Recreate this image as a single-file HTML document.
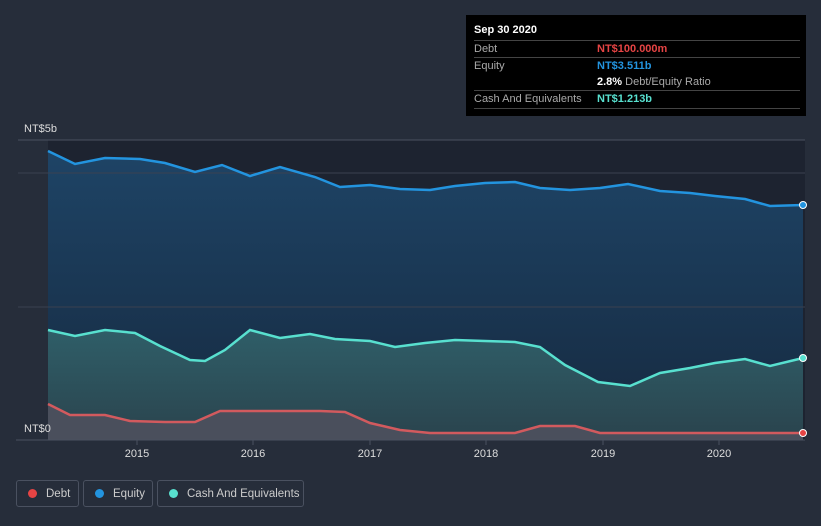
<!DOCTYPE html><html><head><style>
body{margin:0;width:821px;height:526px;background:#262d3a;font-family:"Liberation Sans",sans-serif;overflow:hidden;position:relative}
.tip{position:absolute;left:466px;top:15px;width:340px;height:101px;background:#000;color:#fff;font-size:11px}
.row{position:absolute;left:8px;width:326px;border-top:1px solid #444;height:17px;line-height:17px}
.lab{color:#aaa}
.v{position:absolute;left:123px;top:0;font-weight:bold}
.leg{position:absolute;top:480px;height:27px;border:1px solid #4a5160;border-radius:3px;color:#ccc;font-size:11.5px;line-height:26px;box-sizing:border-box;white-space:nowrap}
.dot{display:inline-block;width:9px;height:9px;border-radius:50%;margin:0 9px 0 11px;vertical-align:-1px}
</style></head><body>
<svg width="821" height="526" style="position:absolute;left:0;top:0">
<defs>
<linearGradient id="eq" x1="0" y1="0" x2="0" y2="1"><stop offset="0" stop-color="#1e4466"/><stop offset="1" stop-color="#16293f"/></linearGradient>
<linearGradient id="ca" x1="0" y1="0" x2="0" y2="1"><stop offset="0" stop-color="#2f5e68"/><stop offset="1" stop-color="#2a434d"/></linearGradient>
</defs>
<rect x="48" y="140" width="757" height="300" fill="#1d2330"/>
<path d="M48,151 L75,164 L105,158 L140,159 L165,163 L195,172 L222,165 L250,176 L280,167 L315,177 L340,187 L370,185 L400,189 L430,190 L455,186 L485,183 L515,182 L540,188 L570,190 L600,188 L628,184 L660,191 L690,193 L715,196 L745,199 L770,206 L803,205 L803,440 L48,440Z" fill="url(#eq)"/>
<path d="M48,330 L75,336 L105,330 L135,333 L160,346 L190,360 L205,361 L225,350 L250,330 L280,338 L310,334 L335,339 L370,341 L395,347 L425,343 L455,340 L485,341 L515,342 L540,347 L565,365 L598,382 L630,386 L660,373 L690,368 L715,363 L745,359 L770,366 L803,358 L803,440 L48,440Z" fill="url(#ca)"/>
<path d="M48,404 L70,415 L105,415 L130,421 L165,422 L195,422 L220,411 L250,411 L280,411 L320,411 L345,412 L370,423 L400,430 L430,433 L515,433 L540,426 L575,426 L600,433 L803,433 L803,440 L48,440Z" fill="#4a4f5c"/>
<line x1="18" y1="140" x2="805" y2="140" stroke="#4a5160"/>
<line x1="18" y1="173" x2="805" y2="173" stroke="#3a4150"/>
<line x1="18" y1="307" x2="805" y2="307" stroke="#3a4150"/>
<path d="M48,151 L75,164 L105,158 L140,159 L165,163 L195,172 L222,165 L250,176 L280,167 L315,177 L340,187 L370,185 L400,189 L430,190 L455,186 L485,183 L515,182 L540,188 L570,190 L600,188 L628,184 L660,191 L690,193 L715,196 L745,199 L770,206 L803,205" fill="none" stroke="#2394df" stroke-width="2.5"/>
<path d="M48,330 L75,336 L105,330 L135,333 L160,346 L190,360 L205,361 L225,350 L250,330 L280,338 L310,334 L335,339 L370,341 L395,347 L425,343 L455,340 L485,341 L515,342 L540,347 L565,365 L598,382 L630,386 L660,373 L690,368 L715,363 L745,359 L770,366 L803,358" fill="none" stroke="#58e0cf" stroke-width="2.5"/>
<path d="M48,404 L70,415 L105,415 L130,421 L165,422 L195,422 L220,411 L250,411 L280,411 L320,411 L345,412 L370,423 L400,430 L430,433 L515,433 L540,426 L575,426 L600,433 L803,433" fill="none" stroke="#d25a5e" stroke-width="2.5"/>
<circle cx="803" cy="205" r="3.5" fill="#2394df" stroke="#fff" stroke-width="1"/>
<circle cx="803" cy="358" r="3.5" fill="#58e0cf" stroke="#fff" stroke-width="1"/>
<circle cx="803" cy="433" r="3.5" fill="#e64444" stroke="#fff" stroke-width="1"/>
<line x1="16" y1="440" x2="805" y2="440" stroke="#4a5160"/>
<g stroke="#4a5160"><line x1="137" y1="440" x2="137" y2="445"/><line x1="253" y1="440" x2="253" y2="445"/><line x1="370" y1="440" x2="370" y2="445"/><line x1="486" y1="440" x2="486" y2="445"/><line x1="603" y1="440" x2="603" y2="445"/><line x1="719" y1="440" x2="719" y2="445"/></g>
<g fill="#ddd" font-size="11" text-anchor="middle" font-family="Liberation Sans,sans-serif"><text x="137" y="457">2015</text><text x="253" y="457">2016</text><text x="370" y="457">2017</text><text x="486" y="457">2018</text><text x="603" y="457">2019</text><text x="719" y="457">2020</text></g>
<text x="24" y="132" fill="#ddd" font-size="11" font-family="Liberation Sans,sans-serif">NT$5b</text>
<text x="24" y="432" fill="#ddd" font-size="11" font-family="Liberation Sans,sans-serif">NT$0</text>
</svg>
<div class="tip">
<div style="position:absolute;left:8px;top:9px;font-weight:bold">Sep 30 2020</div>
<div class="row" style="top:25px"><span class="lab">Debt</span><span class="v" style="color:#e64444">NT$100.000m</span></div>
<div class="row" style="top:42px"><span class="lab">Equity</span><span class="v" style="color:#2394df">NT$3.511b</span></div>
<div class="row" style="top:59px;border:none"><span class="v">2.8% <span style="color:#aaa;font-weight:normal">Debt/Equity Ratio</span></span></div>
<div class="row" style="top:75px;border-bottom:1px solid #444"><span class="lab">Cash And Equivalents</span><span class="v" style="color:#58e0cf">NT$1.213b</span></div>
</div>
<div class="leg" style="left:16px;width:63px"><span class="dot" style="background:#e64444"></span>Debt</div>
<div class="leg" style="left:83px;width:70px"><span class="dot" style="background:#2394df"></span>Equity</div>
<div class="leg" style="left:157px;width:147px"><span class="dot" style="background:#58e0cf"></span>Cash And Equivalents</div>
</body></html>
